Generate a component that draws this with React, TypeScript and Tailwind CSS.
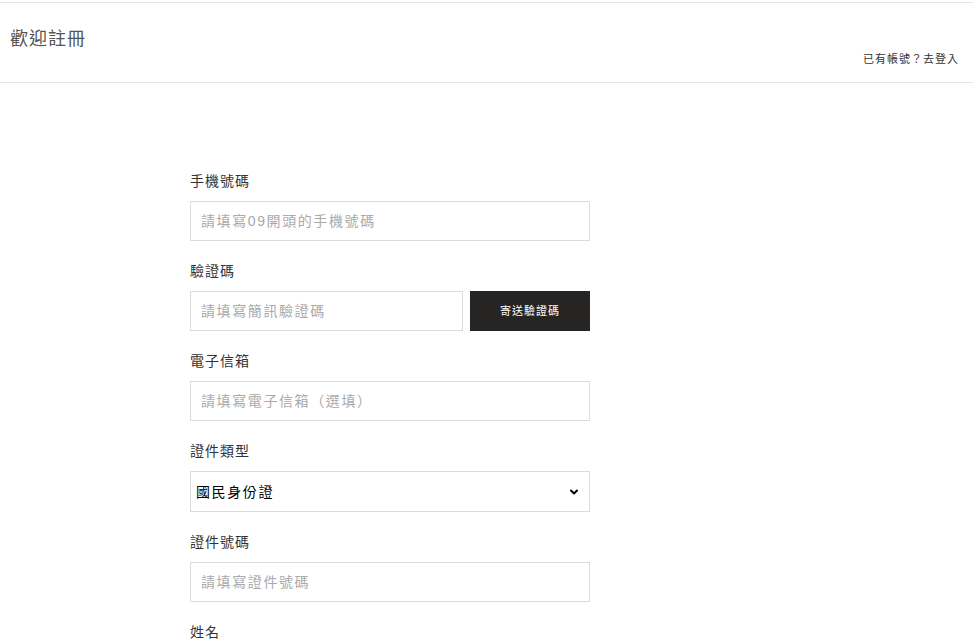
import { ChevronDown } from "lucide-react";

const font = { fontFamily: '"Liberation Sans", "Noto Sans CJK TC", sans-serif' };

const Field = ({ label, children }: { label: string; children: React.ReactNode }) => (
  <div className="mb-[20px]">
    <div className="h-5 leading-5 text-sm tracking-[1px] text-[#333] mb-[10px]">{label}</div>
    {children}
  </div>
);

const Input = ({ placeholder, className = "" }: { placeholder: string; className?: string }) => (
  <input
    placeholder={placeholder}
    className={`h-10 border border-[#dcdcdc] px-[10px] text-sm tracking-[1.6px] text-[#333] placeholder:text-[#aaa] outline-none ${className}`}
  />
);

export default function App() {
  return (
    <div className="min-h-screen bg-white overflow-hidden" style={font}>
      <div className="mt-[2px] border-t border-b border-[#e5e5e5] h-[81px] flex justify-between px-[10px]">
        <h1 className="text-lg tracking-[1px] text-[#555] mt-[24px] leading-6">歡迎註冊</h1>
        <a className="text-[11px] tracking-[1px] text-[#333] self-end mb-[15px] mr-[4px]">已有帳號？去登入</a>
      </div>

      <form className="w-[400px] ml-[190px] pt-[88px]">
        <Field label="手機號碼">
          <Input placeholder="請填寫09開頭的手機號碼" className="w-full" />
        </Field>
        <Field label="驗證碼">
          <div className="flex gap-[7px]">
            <Input placeholder="請填寫簡訊驗證碼" className="w-[273px]" />
            <button type="button" className="flex-1 h-10 bg-[#272424] text-white text-[11px] tracking-[1px]">
              寄送驗證碼
            </button>
          </div>
        </Field>
        <Field label="電子信箱">
          <Input placeholder="請填寫電子信箱（選填）" className="w-full" />
        </Field>
        <Field label="證件類型">
          <div className="relative h-[41px] border border-[#dcdcdc] flex items-center pl-[5px]">
            <span className="text-sm tracking-[1.6px] text-black">國民身份證</span>
            <ChevronDown className="absolute right-[9px] top-[14px] w-3 h-3" strokeWidth={4} />
          </div>
        </Field>
        <Field label="證件號碼">
          <Input placeholder="請填寫證件號碼" className="w-full" />
        </Field>
        <Field label="姓名">
          <Input placeholder="請填寫姓名" className="w-full" />
        </Field>
      </form>
    </div>
  );
}
